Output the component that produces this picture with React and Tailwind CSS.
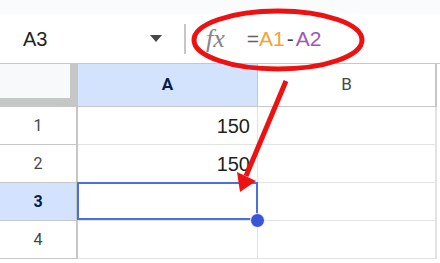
import React from "react";

const rows = [
  { n: 1, a: "150" },
  { n: 2, a: "150" },
  { n: 3, a: "", selected: true },
  { n: 4, a: "" },
];

const FormulaBar = () => (
  <div className="h-[50px] bg-white border-b border-[#c7c7c7] flex items-center">
    <div className="w-[172px] pl-[23px] pr-[10px] flex items-center justify-between">
      <span className="text-[20px] text-[#1f1f1f]">A3</span>
      <span className="w-0 h-0 border-l-[6px] border-r-[6px] border-t-[7px] border-l-transparent border-r-transparent border-t-[#444746]" />
    </div>
    <div className="w-[2px] h-[30px] bg-[#c4c7c5] ml-[12px]" />
    <span className="ml-[20px] text-[26px] italic text-[#80868b] font-['Liberation_Serif',serif] leading-none">
      fx
    </span>
    <span className="ml-[22px] text-[21px] leading-none">
      <span className="text-[#5f6368]">=</span>
      <span className="text-[#f5a236]">A1</span>
      <span className="text-[#3c4043] mx-[2px]">-</span>
      <span className="text-[#9b59b6]">A2</span>
    </span>
  </div>
);

export default function App() {
  return (
    <div className="relative w-[440px] h-[263px] overflow-hidden bg-white font-['Liberation_Sans',Arial,sans-serif]">
      <div className="h-[14px] bg-[#f9fbfd]" />
      <FormulaBar />

      {/* header row */}
      <div className="flex h-[43px] font-['Roboto',sans-serif]">
        <div className="w-[78px] bg-[#c4c7c5]">
          <div className="w-[70px] h-[34px] bg-[#f8f9fa]" />
        </div>
        <div className="w-[180px] bg-[#d3e3fd] border-r border-b border-[#c4c7c5] flex items-center justify-center text-[17px] font-bold text-[#041e49]">
          A
        </div>
        <div className="w-[179px] border-r-2 border-b border-[#c4c7c5] flex items-center justify-center text-[17px] text-[#444746]">
          B
        </div>
      </div>

      {rows.map((r) => (
        <div key={r.n} className="flex h-[38px]">
          <div
            className={`w-[78px] border-r-2 border-b border-[#c4c7c5] flex items-center justify-center text-[16px] font-['Roboto',sans-serif] ${
              r.selected ? "bg-[#d3e3fd] font-bold text-[#041e49]" : "bg-white text-[#444746]"
            }`}
          >
            {r.n}
          </div>
          <div className="relative w-[180px] border-r border-b border-[#e1e3e1] flex items-center justify-end pr-[7px] text-[20px] text-[#1f1f1f]">
            {r.a}
            {r.selected && (
              <>
                <div className="absolute -left-px -top-px w-[181px] h-[38px] border-2 border-[#4a6fe3]" />
                <div className="absolute z-10 -right-[8px] -bottom-[8px] w-[15px] h-[15px] rounded-full bg-[#3c55d6] border-[1.5px] border-white" />
              </>
            )}
          </div>
          <div className="w-[179px] border-r-2 border-b border-[#e1e3e1]" />
        </div>
      ))}

      {/* red annotation */}
      <svg className="absolute inset-0 z-20 pointer-events-none" width="440" height="263" viewBox="0 0 440 263">
        <ellipse cx="278" cy="40" rx="84" ry="29" fill="none" stroke="#ee1111" strokeWidth="5" />
        <line x1="286" y1="81" x2="246" y2="176" stroke="#ee1111" strokeWidth="5" />
        <polygon points="237,172 256,181 240,192" fill="#ee1111" />
      </svg>
    </div>
  );
}
